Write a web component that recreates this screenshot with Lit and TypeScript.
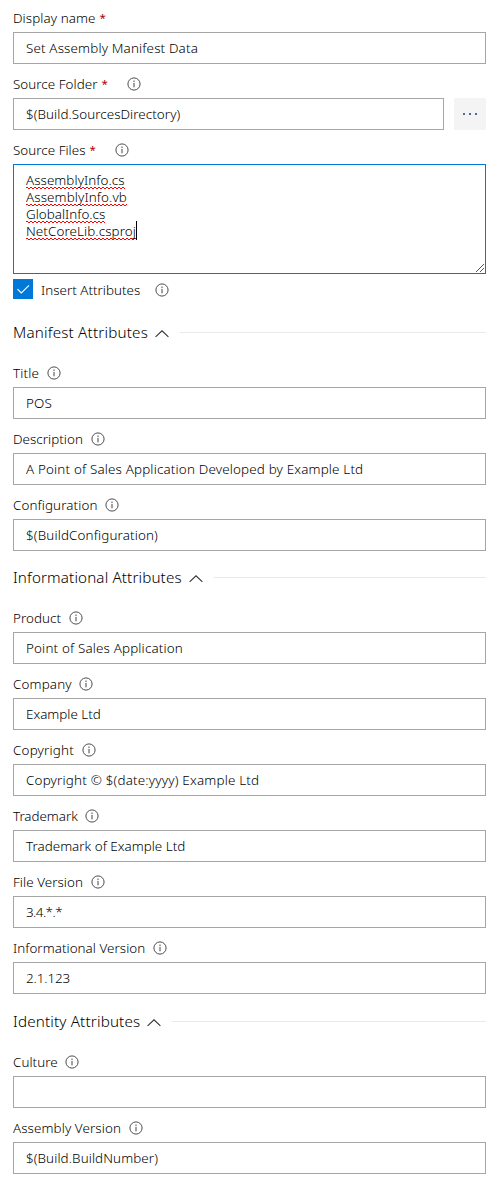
import { LitElement, html, css, svg, nothing } from "lit";
import { customElement, property, query } from "lit/decorators.js";

/** Text run whose tracking is tuned so that it spans the given advance width. */
@customElement("fit-text")
class FitText extends LitElement {
  @property() text = "";
  @property({ type: Number }) span = 0;
  @query(".run") run!: HTMLElement;

  static styles = css`
    :host { display: inline-block; white-space: pre; }
    .run { display: inline-block; white-space: pre; }
  `;

  updated() {
    this.run.style.letterSpacing = "0px";
    const natural = this.run.getBoundingClientRect().width;
    const n = this.text.length;
    if (n && this.span) this.run.style.letterSpacing = `${(this.span - natural) / n}px`;
  }

  render() {
    return html`<span class="run">${this.text}</span>`;
  }
}

const infoIcon = html`<svg class="info" width="14" height="14" viewBox="0 0 14 14">
  <circle cx="7" cy="7" r="6.1" fill="none" stroke="#444" stroke-width="0.95" />
  <rect x="6.5" y="5.9" width="1" height="4.4" fill="#444" />
  <rect x="6.4" y="3.6" width="1.2" height="1.2" fill="#444" />
</svg>`;

@customElement("form-field")
class FormField extends LitElement {
  @property() label = "";
  @property({ type: Number }) labelSpan = 0;
  @property() value = "";
  @property({ type: Number }) valueSpan = 0;
  @property({ type: Boolean }) required = false;
  @property({ type: Boolean }) info = false;
  @property({ type: Boolean }) browse = false;
  @property({ attribute: false }) lines: [string, number][] = [];

  static styles = css`
    :host { display: block; }
    .label { display: flex; align-items: center; height: 27px; padding-top: 7px; }
    .label fit-text { line-height: 20px; margin-top: -1px; }
    .star { color: #a80000; margin-left: 4px; width: 6px; font-size: 11.5px; font-weight: 400; line-height: 20px; margin-top: -1px; }
    .info { display: block; margin-left: 7.6px; margin-top: -1px; }
    .required .info { margin-left: 19.2px; }
    .row { display: flex; gap: 10px; }
    .box { box-sizing: border-box; flex: 1; height: 32px; border: 1px solid #a6a6a6; padding: 0 12px; line-height: 30px; background: #fff; }
    .more { display: flex; align-items: center; justify-content: center; gap: 4px; width: 32px; height: 32px; background: #f4f4f4; border-radius: 1px; }
    .dot { width: 2px; height: 2px; background: #4a6c96; }
    .area { position: relative; box-sizing: border-box; height: 110px; border: 1px solid #0078d4; padding: 7px 12px; }
    .line { display: flex; height: 17px; line-height: 17px; }
    .line fit-text {
      height: 17px;
      background: url("data:image/svg+xml,%3Csvg xmlns='http://www.w3.org/2000/svg' width='4' height='2' shape-rendering='crispEdges'%3E%3Cpath d='M0 0h2v1H0zM2 1h2v1H2z' fill='red'/%3E%3C/svg%3E") 0 100% repeat-x;
    }
    .caret { width: 1px; height: 19px; background: #000; margin-top: -2px; }
    .grip { position: absolute; right: 1px; bottom: 1px; display: block; }
  `;

  render() {
    return html`
      <div class="label ${this.required ? "required" : ""}">
        <fit-text .text=${this.label} .span=${this.labelSpan}></fit-text>
        ${this.required ? html`<span class="star">*</span>` : nothing}
        ${this.info ? infoIcon : nothing}
      </div>
      ${this.lines.length
        ? html`<div class="area">
            ${this.lines.map(
              ([t, w], i) => html`<div class="line">
                <fit-text .text=${t} .span=${w}></fit-text>
                ${i === this.lines.length - 1 ? html`<span class="caret"></span>` : nothing}
              </div>`
            )}
            <svg class="grip" width="8" height="8" viewBox="0 0 8 8" shape-rendering="crispEdges">
              ${[0, 1, 2, 3, 4, 5, 6, 7].map((i) => svg`<rect x=${i} y=${7 - i} width="1" height="1" fill="#555"/>`)}
              ${[4, 5, 6, 7].map((i) => svg`<rect x=${i} y=${11 - i} width="1" height="1" fill="#555"/>`)}
            </svg>
          </div>`
        : html`<div class="row">
            <div class="box"><fit-text .text=${this.value} .span=${this.valueSpan}></fit-text></div>
            ${this.browse
              ? html`<div class="more"><i class="dot"></i><i class="dot"></i><i class="dot"></i></div>`
              : nothing}
          </div>`}
    `;
  }
}

type Field = [label: string, labelSpan: number, value: string, valueSpan: number];
interface Section { title: string; span: number; lead: string; fields: Field[]; }

const sections: Section[] = [
  {
    title: "Manifest Attributes", span: 135, lead: "lead-7",
    fields: [
      ["Title", 26, "POS", 26],
      ["Description", 70, "A Point of Sales Application Developed by Example Ltd", 337.3],
      ["Configuration", 84.5, "$(BuildConfiguration)", 132],
    ],
  },
  {
    title: "Informational Attributes", span: 168.7, lead: "",
    fields: [
      ["Product", 48, "Point of Sales Application", 157],
      ["Company", 58.7, "Example Ltd", 74.7],
      ["Copyright", 61, "Copyright © $(date:yyyy) Example Ltd", 233.3],
      ["Trademark", 64.7, "Trademark of Example Ltd", 159.3],
      ["File Version", 70, "3.4.*.*", 36],
      ["Informational Version", 132.3, "2.1.123", 44],
    ],
  },
  {
    title: "Identity Attributes", span: 127.3, lead: "lead-1",
    fields: [
      ["Culture", 44.7, "", 0],
      ["Assembly Version", 108, "$(Build.BuildNumber)", 132],
    ],
  },
];

@customElement("app-root")
class AppRoot extends LitElement {
  static styles = css`
    :host {
      display: block;
      box-sizing: border-box;
      height: 1193px;
      padding: 0 14px 0 13px;
      background: #fff;
      color: #000;
      font: 350 13.4px "Noto Sans", "Open Sans", sans-serif;
      overflow: hidden;
    }
    .first { margin-top: -2px; }
    .check { display: flex; align-items: center; height: 20px; margin-top: 5px; }
    .tick { display: block; margin-right: 8px; }
    .info { display: block; margin-left: 15px; margin-top: 2px; }
    .check fit-text { margin-top: 1px; }
    .heading { display: flex; align-items: center; height: 41px; padding-top: 6px; font-size: 15.2px; }
    .heading fit-text { margin-top: -2px; }
    .lead-7 { margin-top: 7px; }
    .lead-1 { margin-top: 1px; }
    .chevron { display: block; margin-left: 7px; margin-top: 1px; }
    .rule { flex: 1; height: 1px; background: #eaeaea; margin-left: 11px; }
  `;

  render() {
    return html`
      <form-field class="first" label="Display name" .labelSpan=${82.5} required value="Set Assembly Manifest Data" .valueSpan=${172}></form-field>
      <form-field label="Source Folder" .labelSpan=${84.5} required info browse value="$(Build.SourcesDirectory)" .valueSpan=${154.3}></form-field>
      <form-field label="Source Files" .labelSpan=${72.5} required info
        .lines=${[["AssemblyInfo.cs", 98.5], ["AssemblyInfo.vb", 101], ["GlobalInfo.cs", 79.3], ["NetCoreLib.csproj", 110]]}></form-field>
      <div class="check">
        <svg class="tick" width="20" height="20" viewBox="0 0 20 20">
          <rect width="20" height="20" fill="#0078d7" />
          <path d="M4.4 10.2L8.3 14L16 6.3" fill="none" stroke="#fff" stroke-width="1.1" />
        </svg>
        <fit-text text="Insert Attributes" .span=${99.3}></fit-text>
        ${infoIcon}
      </div>
      ${sections.map(
        (s) => html`
          <div class="heading ${s.lead}">
            <fit-text .text=${s.title} .span=${s.span}></fit-text>
            <svg class="chevron" width="14" height="9" viewBox="0 0 14 9">
              <path d="M0.6 7.8L7 1.8L13.4 7.8" fill="none" stroke="#333" stroke-width="1.1" />
            </svg>
            <div class="rule"></div>
          </div>
          ${s.fields.map(
            ([l, lw, v, vw]) => html`<form-field info .label=${l} .labelSpan=${lw} .value=${v} .valueSpan=${vw}></form-field>`
          )}
        `
      )}
    `;
  }
}
